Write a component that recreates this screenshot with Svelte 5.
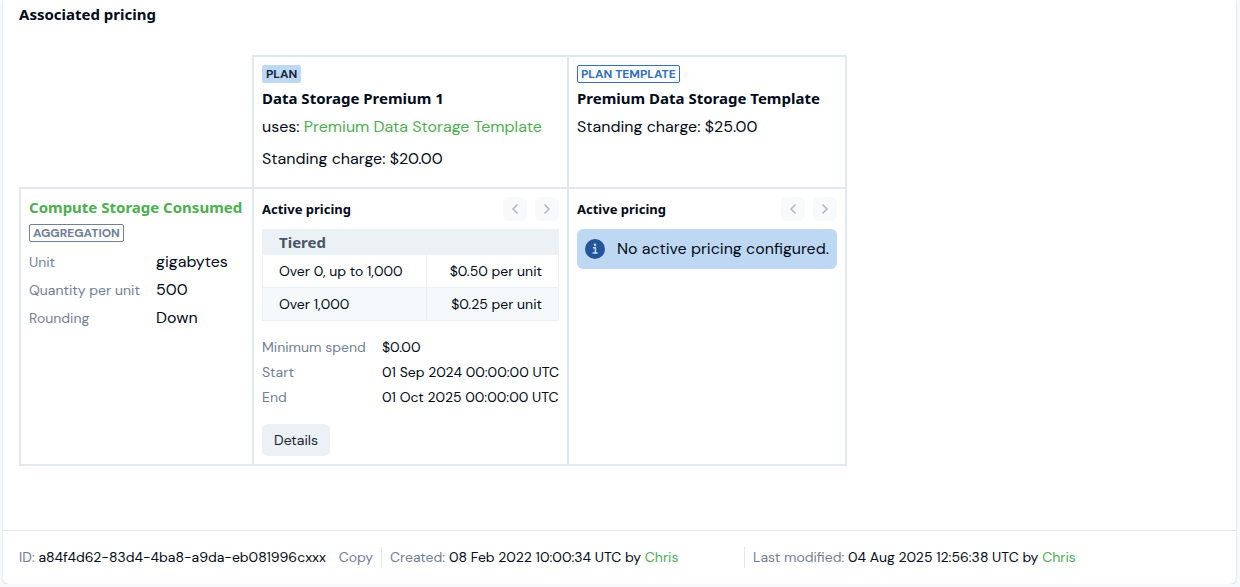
<script>
  const aggregation = {
    name: 'Compute Storage Consumed',
    details: [
      { label: 'Unit', value: 'gigabytes' },
      { label: 'Quantity per unit', value: '500' },
      { label: 'Rounding', value: 'Down' }
    ]
  };

  const bands = [
    { range: 'Over 0, up to 1,000', price: '$0.50 per unit' },
    { range: 'Over 1,000', price: '$0.25 per unit' }
  ];

  const pricingDetails = [
    { label: 'Minimum spend', value: '$0.00' },
    { label: 'Start', value: '01 Sep 2024 00:00:00 UTC' },
    { label: 'End', value: '01 Oct 2025 00:00:00 UTC' }
  ];
</script>

{#snippet pricingHeader()}
  <div class="pricing-header">
    <h4>Active pricing</h4>
    <div class="pager">
      <button class="icon-button" aria-label="Previous pricing" disabled>
        <svg viewBox="0 0 24 24"><path d="M14.5 7.5L10 12l4.5 4.5" /></svg>
      </button>
      <button class="icon-button" aria-label="Next pricing" disabled>
        <svg viewBox="0 0 24 24"><path d="M9.5 7.5L14 12l-4.5 4.5" /></svg>
      </button>
    </div>
  </div>
{/snippet}

<main class="card">
  <section class="content">
    <h2>Associated pricing</h2>

    <table class="matrix">
      <colgroup>
        <col class="col-aggregation" />
        <col class="col-plan" />
        <col class="col-template" />
      </colgroup>
      <thead>
        <tr>
          <td class="empty"></td>
          <th>
            <span class="badge solid">PLAN</span>
            <h3>Data Storage Premium 1</h3>
            <p>uses: <a href="#template">Premium Data Storage Template</a></p>
            <p class="charge">Standing charge: $20.00</p>
          </th>
          <th>
            <span class="badge outline">PLAN TEMPLATE</span>
            <h3>Premium Data Storage Template</h3>
            <p>Standing charge: $25.00</p>
          </th>
        </tr>
      </thead>
      <tbody>
        <tr>
          <th>
            <h3 class="aggregation-name"><a href="#aggregation">{aggregation.name}</a></h3>
            <span class="badge muted">AGGREGATION</span>
            <dl class="aggregation-details">
              {#each aggregation.details as item}
                <dt>{item.label}</dt>
                <dd>{item.value}</dd>
              {/each}
            </dl>
          </th>
          <td>
            {@render pricingHeader()}
            <table class="bands">
              <thead>
                <tr><th colspan="2">Tiered</th></tr>
              </thead>
              <tbody>
                {#each bands as band}
                  <tr>
                    <td>{band.range}</td>
                    <td class="price">{band.price}</td>
                  </tr>
                {/each}
              </tbody>
            </table>
            <dl class="pricing-details">
              {#each pricingDetails as item}
                <dt>{item.label}</dt>
                <dd>{item.value}</dd>
              {/each}
            </dl>
            <button class="details-button">Details</button>
          </td>
          <td>
            {@render pricingHeader()}
            <div class="alert" role="status">
              <svg viewBox="0 0 20 20" aria-hidden="true">
                <circle cx="10" cy="10" r="10" />
                <path d="M8 8.8h2.4v5.1M7.6 14h5" />
                <circle class="dot" cx="10" cy="5.8" r="1.2" />
              </svg>
              <span>No active pricing configured.</span>
            </div>
          </td>
        </tr>
      </tbody>
    </table>
  </section>

  <footer>
    <div class="meta">
      <span><span class="label">ID:</span> a84f4d62-83d4-4ba8-a9da-eb081996cxxx</span>
      <button class="copy">Copy</button>
    </div>
    <div class="meta">
      <span><span class="label">Created:</span> 08 Feb 2022 10:00:34 UTC by <a href="#chris">Chris</a></span>
    </div>
    <div class="meta">
      <span><span class="label">Last modified:</span> 04 Aug 2025 12:56:38 UTC by <a href="#chris">Chris</a></span>
    </div>
  </footer>
</main>

<style>
  :global(body) {
    background: #f7fafc;
    color: #010b19;
    font-family: 'DM Sans', Inter, sans-serif;
    font-size: 16px;
    line-height: 24px;
  }

  .card {
    margin: 0 4px 0 3px;
    background: #fff;
    border-radius: 0 0 6px 6px;
    box-shadow: 0 1px 3px rgba(0, 0, 0, 0.1), 0 1px 2px rgba(0, 0, 0, 0.06);
  }

  .content {
    padding: 3px 16px 64px;
  }

  h2,
  h3,
  h4,
  p,
  dl,
  dd {
    margin: 0;
  }

  h2,
  h3,
  h4 {
    font-family: 'Segoe UI', 'Noto Sans', sans-serif;
    font-size: 15px;
    font-weight: 700;
    line-height: 22px;
  }

  h4 {
    font-size: 13px;
  }

  a {
    color: #4caf50;
    text-decoration: none;
  }

  a:hover {
    text-decoration: underline;
  }

  button {
    border: 0;
    padding: 0;
    color: inherit;
    font: inherit;
    cursor: pointer;
  }

  table {
    border-collapse: collapse;
  }

  th {
    font-weight: 400;
    text-align: left;
  }

  .matrix {
    table-layout: fixed;
    width: 828px;
    margin-top: 30px;
    white-space: nowrap;
  }

  .col-aggregation {
    width: 233px;
  }

  .col-plan {
    width: 315px;
  }

  .matrix > * > tr > * {
    border: 2px solid #e2e8f0;
    padding: 8px;
    vertical-align: top;
  }

  .matrix .empty {
    border-top: 0;
    border-left: 0;
  }

  .badge {
    display: block;
    width: fit-content;
    box-sizing: border-box;
    margin-bottom: 4px;
    border: 1px solid transparent;
    border-radius: 2px;
    padding: 0 3px;
    font-size: 12px;
    font-weight: 700;
    line-height: 16px;
  }

  .solid {
    background: #bed8f3;
    color: #142840;
  }

  .outline {
    border-color: #3170c0;
    color: #3170c0;
  }

  .muted {
    border-color: #718096;
    color: #718096;
  }

  h3 {
    margin-bottom: 6px;
  }

  .aggregation-name {
    margin-bottom: 7px;
    line-height: 20px;
  }

  .charge {
    margin: 8px 0;
  }

  dl {
    display: grid;
    column-gap: 16px;
    row-gap: 4px;
  }

  dt,
  .label,
  .copy {
    color: #718096;
  }

  .aggregation-details {
    grid-template-columns: 111px 1fr;
    margin-top: 8px;
  }

  dt {
    font-size: 14px;
  }

  .pricing-header,
  .pager,
  .alert,
  .meta {
    display: flex;
    align-items: center;
  }

  .pricing-header {
    justify-content: space-between;
    margin-bottom: 8px;
  }

  .pager {
    gap: 8px;
  }

  .icon-button {
    width: 24px;
    height: 24px;
    border-radius: 6px;
    background: #f8f9fb;
    color: #b3b6ba;
    cursor: default;
  }

  .icon-button svg {
    display: block;
    width: 24px;
    height: 24px;
    fill: none;
    stroke: currentColor;
    stroke-width: 1.5;
  }

  .bands {
    width: 100%;
    font-size: 14px;
    line-height: 20px;
  }

  .bands th {
    border: 1px solid #ebf1f5;
    padding: 1px 16px;
    background: #ebf1f5;
    color: #4a5568;
    font-family: 'Segoe UI', 'Noto Sans', sans-serif;
    font-size: 15px;
    font-weight: 700;
    line-height: 22px;
  }

  .bands td {
    border: 1px solid #ebf1f5;
    padding: 6px 16px;
  }

  .bands tr:nth-child(2) td {
    background: #f5f9fc;
  }

  .bands .price {
    width: 99px;
    text-align: right;
  }

  .pricing-details {
    grid-template-columns: 104px 1fr;
    margin: 16px 0;
    font-size: 14px;
    line-height: 21px;
  }

  .details-button {
    display: block;
    height: 32px;
    border-radius: 6px;
    padding: 0 12px;
    background: #ebf1f5;
    color: #1a2530;
    font-size: 14px;
  }

  .alert {
    gap: 12px;
    border-radius: 6px;
    padding: 8px;
    background: #bed8f3;
  }

  .alert svg {
    flex: none;
    width: 20px;
    height: 20px;
    fill: #22559c;
  }

  .alert path {
    fill: none;
    stroke: #cfe2f6;
    stroke-width: 1.4;
  }

  .alert .dot {
    fill: #cfe2f6;
  }

  footer {
    display: grid;
    grid-template-columns: 362px 363px 1fr;
    border-top: 1px solid #e2e8f0;
    padding: 16px;
    font-size: 14px;
    line-height: 21px;
    white-space: nowrap;
  }

  .meta {
    justify-content: space-between;
  }

  .meta + .meta {
    border-left: 1px solid #e2e8f0;
    padding-left: 8px;
  }

  .copy {
    margin-right: 8px;
    background: none;
  }
</style>
